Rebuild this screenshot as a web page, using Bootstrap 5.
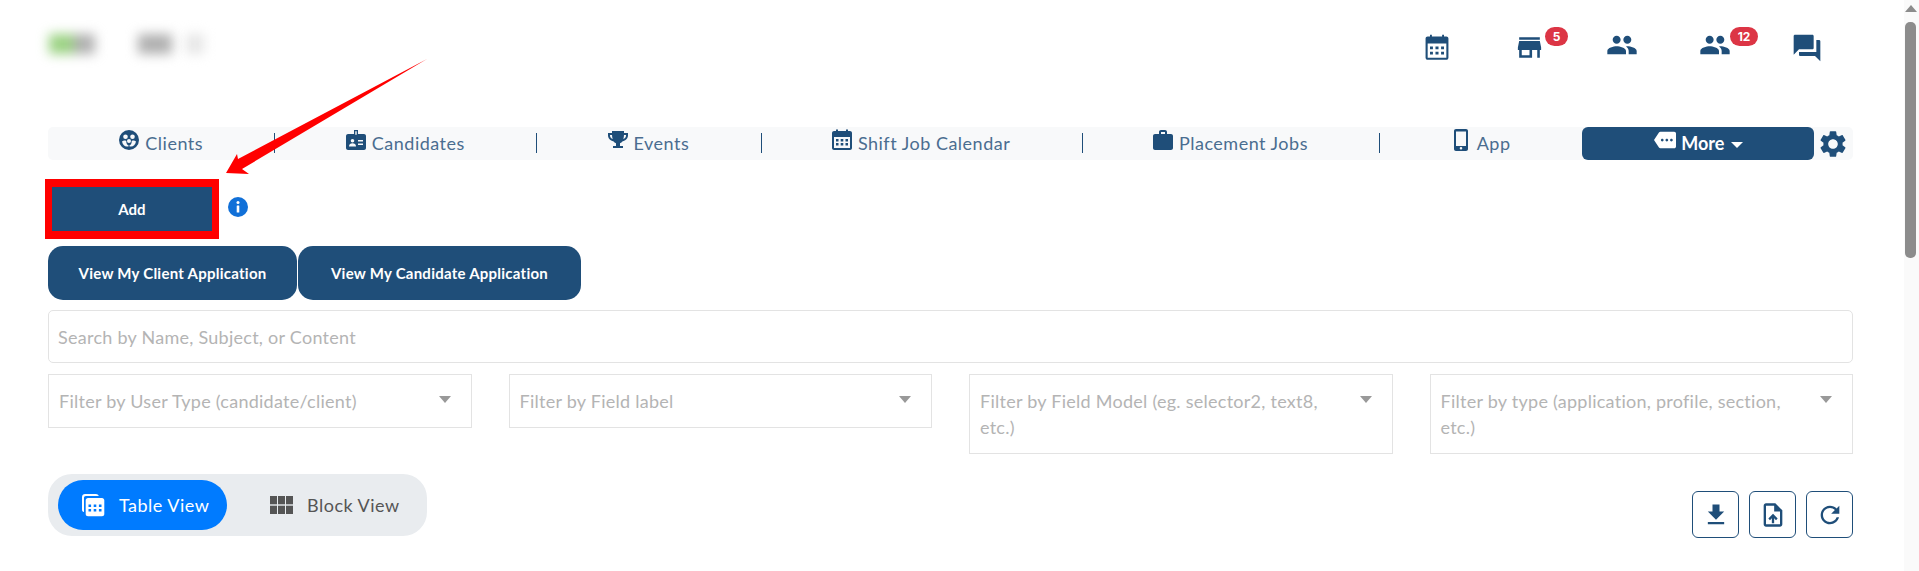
<!DOCTYPE html>
<html lang="en">
  <head>
    <meta charset="UTF-8" />
    <title>Application Fields</title>
    <link href="https://cdn.jsdelivr.net/npm/bootstrap@5.3.2/dist/css/bootstrap.min.css" rel="stylesheet" />
    <style>
      body {
        font-family: Lato, "Liberation Sans", sans-serif;
        background: #fff;
        overflow: hidden;
        height: 571px;
      }
      .page-wrap {
        padding: 0 66px 0 48px;
        position: relative;
      }
      .top-head {
        height: 127px;
        position: relative;
      }
      .blur-logo {
        position: absolute;
        top: 34px;
        height: 20px;
        filter: blur(6px);
      }
      .logo-a {
        left: 1px;
        width: 46px;
        background: linear-gradient(90deg, #9bd283 0 55%, #b0b0b0 55%);
      }
      .logo-b {
        left: 90px;
        width: 34px;
        background: #b0b0b0;
      }
      .logo-c {
        left: 138px;
        width: 18px;
        background: #e6e6e6;
      }
      .top-icon {
        position: absolute;
        fill: #1f4e79;
      }
      .top-badge {
        position: absolute;
        top: 27px;
        height: 19px;
        border-radius: 10px;
        background: #dc3545;
        color: #fff;
        font: 700 12px/19px Inter, sans-serif;
        text-align: center;
      }
      .main-nav {
        height: 33px;
        background: #f8f9fa;
        border-radius: 5px;
        flex-wrap: nowrap;
      }
      .main-nav .nav-link {
        height: 33px;
        padding: 0;
        color: #4a6d90;
        font-size: 18px;
        letter-spacing: 0.5px;
        line-height: 33px;
        white-space: nowrap;
        position: relative;
      }
      .main-nav .nav-item + .nav-item .nav-link::before {
        content: "";
        position: absolute;
        left: 0;
        top: 6px;
        height: 20px;
        width: 1px;
        background: #1f4e79;
      }
      .main-nav .nav-item.no-sep .nav-link::before {
        display: none;
      }
      .nav-ico {
        width: 20px;
        height: 22px;
        fill: #1f4e79;
        vertical-align: -2px;
        margin-right: 6px;
        position: relative;
        top: -1px;
      }
      .main-nav .more-link {
        background: #1f4e79;
        border-radius: 6px;
        color: #fff;
        font-weight: 700;
        letter-spacing: 0;
      }
      .more-caret {
        display: inline-block;
        border: 6px solid transparent;
        border-top-color: #fff;
        border-bottom: 0;
        vertical-align: 2px;
        margin-left: 2px;
      }
      .gear-ico {
        width: 32px;
        height: 32px;
        fill: #1f4e79;
        margin: 0 4px 0 3px;
        align-self: center;
      }
      .add-frame {
        border-style: solid;
        border-color: #f00;
        border-width: 8px 7px;
        margin: 19px 0 0 -3px;
        width: 174px;
        height: 60px;
      }
      .add-btn {
        width: 100%;
        height: 100%;
        background: #1f4e79;
        color: #fff;
        border: 0;
        border-radius: 0;
        font-size: 15px;
        font-weight: 700;
        padding: 0;
      }
      .info-ico {
        width: 20px;
        height: 20px;
        margin: 37px 0 0 9px;
      }
      .view-btn {
        height: 54px;
        background: #1f4e79;
        color: #fff;
        border-radius: 15px;
        font-size: 15px;
        font-weight: 700;
        letter-spacing: 0.25px;
        padding: 0;
        border: 0;
      }
      .view-btn:hover {
        background: #1f4e79;
        color: #fff;
      }
      .search-box {
        height: 53px;
        margin-top: 10px;
        border: 1px solid #e3e3e3;
        border-radius: 5px;
        padding: 0 9px;
        font-size: 18px;
        letter-spacing: 0.26px;
        color: #333;
      }
      .search-box::placeholder {
        color: #b4b4b4;
      }
      .filter-row {
        display: grid;
        grid-template-columns: repeat(4, 1fr);
        gap: 37px;
        align-items: start;
        margin-top: 11px;
      }
      .filter-box {
        border: 1px solid #e3e3e3;
        padding: 13px 55px 13px 10px;
        font-size: 18px;
        letter-spacing: 0.26px;
        line-height: 26px;
        color: #b4b4b4;
        position: relative;
      }
      .filter-box::after {
        content: "";
        position: absolute;
        right: 20px;
        top: 21px;
        border: 6px solid transparent;
        border-top: 7px solid #999;
        border-bottom: 0;
      }
      .toggle-row {
        margin-top: 20px;
      }
      .toggle-wrap {
        width: 379px;
        height: 62px;
        background: #e9ecef;
        border-radius: 24px;
        padding: 6px 10px;
      }
      .toggle-item {
        width: 169px;
        height: 50px;
        border-radius: 25px;
        font-size: 18px;
        letter-spacing: 0.5px;
        color: #555;
        padding-left: 23px;
        gap: 14px;
      }
      .toggle-item.is-on {
        background: #007bff;
        color: #fff;
      }
      .toggle-item.is-off {
        margin-left: 20px;
      }
      .square-row {
        margin-top: 17px;
        gap: 10px;
      }
      .square-btn {
        width: 47px;
        height: 47px;
        border: 1px solid #1f4e79;
        border-radius: 6px;
        background: #fff;
        padding: 0;
        fill: #1f4e79;
      }
      .square-btn svg {
        width: 28px;
        height: 28px;
      }
      .fake-scroll {
        position: fixed;
        top: 0;
        right: 0;
        bottom: 0;
        width: 15px;
        background: #fafafa;
      }
      .fake-thumb {
        position: absolute;
        top: 22px;
        left: 1px;
        width: 11px;
        height: 236px;
        background: #8c8c8c;
        border-radius: 5px;
      }
      .fake-up {
        position: absolute;
        top: 5px;
        left: 1px;
        border: 6px solid transparent;
        border-bottom: 7px solid #8c8c8c;
        border-top: 0;
      }
      .red-arrow {
        position: absolute;
        left: 0;
        top: 0;
        pointer-events: none;
      }
    </style>
  </head>
  <body>
    <div class="page-wrap">
      <div class="top-head">
        <div class="blur-logo logo-a"></div>
        <div class="blur-logo logo-b"></div>
        <div class="blur-logo logo-c"></div>

        <svg class="top-icon" style="left: 1374px; top: 33px" width="30" height="28" viewBox="0 0 24 24">
          <path d="M4 3h2V1.500h1.600V3h8.800V1.500H18V3h2c1 0 1.800.8 1.800 1.800v16.400c0 1-.8 1.800-1.800 1.800H4c-1 0-1.800-.8-1.800-1.800V4.800C2.200 3.800 3 3 4 3zm0 6v12.200h16V9H4zm2 2.500h2.500V14H6zm4.700 0h2.600V14h-2.600zm4.800 0H18V14h-2.500zM6 16h2.500v2.500H6zm4.700 0h2.600v2.500h-2.600zm4.800 0H18v2.500h-2.500z" />
        </svg>
        <svg class="top-icon" style="left: 1466px; top: 32px" width="31" height="31" viewBox="0 0 24 24">
          <path d="M20 4H4v2h16V4zm1 10v-2l-1-5H4l-1 5v2h1v6h10v-6h4v6h2v-6h1zm-9 4H6v-4h6v4z" />
        </svg>
        <span class="top-badge" style="left: 1497px; width: 23px">5</span>
        <svg class="top-icon" style="left: 1558px; top: 29px" width="32" height="32" viewBox="0 0 24 24">
          <path d="M16 11c1.660 0 2.990-1.340 2.990-3S17.660 5 16 5c-1.660 0-3 1.340-3 3s1.340 3 3 3zm-8 0c1.660 0 2.990-1.340 2.990-3S9.660 5 8 5C6.340 5 5 6.340 5 8s1.340 3 3 3zm0 2c-2.330 0-7 1.170-7 3.500V19h14v-2.500c0-2.330-4.670-3.500-7-3.500zm8 0c-.290 0-.620.020-.970.050 1.160.840 1.970 1.970 1.970 3.450V19h6v-2.500c0-2.330-4.670-3.500-7-3.500z" />
        </svg>
        <svg class="top-icon" style="left: 1651px; top: 29px" width="32" height="32" viewBox="0 0 24 24">
          <path d="M16 11c1.660 0 2.990-1.340 2.990-3S17.660 5 16 5c-1.660 0-3 1.340-3 3s1.340 3 3 3zm-8 0c1.660 0 2.990-1.340 2.990-3S9.660 5 8 5C6.340 5 5 6.340 5 8s1.340 3 3 3zm0 2c-2.330 0-7 1.170-7 3.500V19h14v-2.500c0-2.330-4.670-3.500-7-3.500zm8 0c-.290 0-.620.020-.970.050 1.160.840 1.970 1.970 1.970 3.450V19h6v-2.500c0-2.330-4.670-3.500-7-3.500z" />
        </svg>
        <span class="top-badge" style="left: 1682px; width: 28px">12</span>
        <svg class="top-icon" style="left: 1743px; top: 32px" width="32" height="32" viewBox="0 0 24 24">
          <path d="M21 6h-2v9H6v2c0 .550.450 1 1 1h11l4 4V7c0-.550-.450-1-1-1zm-4 6V3c0-.550-.450-1-1-1H3c-.550 0-1 .450-1 1v14l4-4h10c.550 0 1-.450 1-1z" />
        </svg>
      </div>

      <div class="d-flex main-nav">
        <ul class="nav nav-fill flex-grow-1 flex-nowrap">
          <li class="nav-item">
            <a class="nav-link" href="#">
              <svg class="nav-ico" viewBox="0 0 20 22">
                <path fill-rule="evenodd" d="M10 1a10 10 0 1 0 0 20 10 10 0 0 0 0-20zM6.500 5.500a2.300 2.300 0 1 1 0 4.600 2.300 2.300 0 0 1 0-4.600zm7 0a2.300 2.300 0 1 1 0 4.600 2.300 2.300 0 0 1 0-4.600zM10 10a2 2 0 1 1 0 4 2 2 0 0 1 0-4zM3 12.500c1.500-1.200 3-1 4.300-.5-.2 2 .8 4 2.700 5-3 1.500-6 0-7-4.500zm14 0c-1 4.500-4 6-7 4.500 1.900-1 2.900-3 2.700-5 1.300-.5 2.800-.7 4.300.5z" />
              </svg>Clients
            </a>
          </li>
          <li class="nav-item">
            <a class="nav-link" href="#">
              <svg class="nav-ico" viewBox="0 0 20 22">
                <path fill-rule="evenodd" d="M8 1h4v4h6c1 0 2 .8 2 2v12c0 1.200-1 2-2 2H2c-1 0-2-.8-2-2V7c0-1.200 1-2 2-2h6zM9.300 2.300v3.500h1.400V2.300zM6.500 10a1.800 1.800 0 1 0 0 3.600 1.800 1.800 0 0 0 0-3.600zM3 17.500h7c0-2-1.500-3.200-3.500-3.200S3 15.500 3 17.500zM12 11v1.500h5V11zm0 3.500V16h5v-1.500z" />
              </svg>Candidates
            </a>
          </li>
          <li class="nav-item">
            <a class="nav-link" href="#">
              <svg class="nav-ico" viewBox="0 0 20 22">
                <path fill-rule="evenodd" d="M4 2h12v2h4v2.500c0 3-2.500 5.300-5.300 5.800-.8 1-1.700 1.600-2.700 1.900V17h3v2H5v-2h3v-2.800c-1-.3-1.900-.9-2.700-1.900C2.500 11.800 0 9.500 0 6.500V4h4zM2 6v.500c0 1.700 1.200 3 2.700 3.600C4.300 8.800 4 7.400 4 6zm14 0c0 1.400-.3 2.800-.7 4.100 1.500-.6 2.700-1.900 2.700-3.600V6z" />
              </svg>Events
            </a>
          </li>
          <li class="nav-item">
            <a class="nav-link" href="#">
              <svg class="nav-ico" viewBox="0 0 20 22">
                <path fill-rule="evenodd" d="M2 2h2V.500h2V2h8V.500h2V2h2c1 0 2 .8 2 2v15c0 1.200-1 2-2 2H2c-1 0-2-.8-2-2V4c0-1.200 1-2 2-2zm0 6v11h16V8zm2 2h2.500v2.500H4zm4.700 0h2.600v2.500H8.700zm4.800 0H16v2.500h-2.500zM4 14h2.500v2.500H4zm4.700 0h2.600v2.500H8.700zm4.800 0H16v2.500h-2.500z" />
              </svg>Shift Job Calendar
            </a>
          </li>
          <li class="nav-item">
            <a class="nav-link" href="#">
              <svg class="nav-ico" viewBox="0 0 20 22">
                <path fill-rule="evenodd" d="M6 5V3c0-1.200.9-2 2-2h4c1.100 0 2 .8 2 2v2h4c1.100 0 2 .8 2 2v12c0 1.200-.9 2-2 2H2c-1.100 0-2-.8-2-2V7c0-1.200.9-2 2-2zm2-2v2h4V3z" />
              </svg>Placement Jobs
            </a>
          </li>
          <li class="nav-item">
            <a class="nav-link" href="#">
              <svg class="nav-ico" viewBox="0 0 20 22">
                <path fill-rule="evenodd" d="M5 0h10c1.200 0 2 .8 2 2v18c0 1.200-.8 2-2 2H5c-1.200 0-2-.8-2-2V2c0-1.200.8-2 2-2zm0 2.500V17h10V2.500zM10 18a1.300 1.300 0 1 0 0 2.600 1.300 1.300 0 0 0 0-2.600z" />
              </svg>App
            </a>
          </li>
          <li class="nav-item no-sep">
            <a class="nav-link more-link" href="#">
              <svg class="nav-ico" style="width: 24px; fill: #fff; margin-right: 4px" viewBox="0 0 24 24">
                <path d="M22 3H7c-.690 0-1.230.350-1.590.880L0 12l5.410 8.110c.360.530.900.890 1.590.890h15c1.100 0 2-.900 2-2V5c0-1.100-.900-2-2-2zM9 13.500c-.830 0-1.500-.670-1.500-1.500s.670-1.500 1.500-1.500 1.500.670 1.500 1.500-.670 1.500-1.500 1.500zm5 0c-.830 0-1.500-.670-1.500-1.500s.670-1.500 1.500-1.500 1.500.670 1.500 1.500-.670 1.500-1.500 1.500zm5 0c-.830 0-1.500-.670-1.500-1.500s.670-1.500 1.500-1.500 1.500.670 1.500 1.500-.670 1.500-1.500 1.500z" />
              </svg>More <span class="more-caret"></span>
            </a>
          </li>
        </ul>
        <svg class="gear-ico flex-shrink-0" viewBox="0 0 24 24">
          <path d="M19.140 12.940c.040-.300.060-.610.060-.940 0-.320-.020-.640-.070-.940l2.030-1.580c.180-.140.230-.410.120-.610l-1.920-3.320c-.120-.220-.370-.290-.590-.220l-2.390.960c-.500-.380-1.030-.700-1.620-.940l-.360-2.540c-.040-.240-.240-.410-.480-.410h-3.840c-.240 0-.430.170-.470.410l-.360 2.540c-.590.240-1.130.570-1.620.940l-2.390-.960c-.220-.080-.470 0-.590.220L2.740 8.870c-.120.210-.080.470.120.610l2.030 1.580c-.050.300-.090.630-.090.940s.020.640.070.940l-2.030 1.580c-.180.140-.230.410-.12.610l1.920 3.320c.120.220.370.290.590.220l2.390-.960c.500.380 1.030.700 1.620.940l.360 2.540c.050.240.240.410.480.410h3.840c.240 0 .440-.170.470-.410l.360-2.540c.590-.240 1.130-.560 1.620-.940l2.390.960c.220.080.470 0 .590-.220l1.920-3.320c.120-.220.070-.470-.120-.610l-2.010-1.580zM12 15.600c-1.980 0-3.600-1.620-3.600-3.600s1.620-3.600 3.600-3.600 3.600 1.620 3.600 3.600-1.620 3.600-3.600 3.600z" />
        </svg>
      </div>

      <div class="d-flex align-items-start">
        <div class="add-frame"><button class="btn add-btn">Add</button></div>
        <svg class="info-ico" viewBox="0 0 20 20">
          <circle cx="10" cy="10" r="10" fill="#1170d8" />
          <circle cx="10" cy="5.500" r="1.500" fill="#fff" />
          <rect x="8.700" y="8.500" width="2.600" height="7" rx="0.500" fill="#fff" />
        </svg>
      </div>

      <div class="d-flex" style="gap: 1px; margin-top: 7px">
        <button class="btn view-btn" style="width: 249px">View My Client Application</button>
        <button class="btn view-btn" style="width: 283px">View My Candidate Application</button>
      </div>

      <input class="form-control search-box" type="text" placeholder="Search by Name, Subject, or Content" />

      <div class="filter-row">
        <div class="filter-box">Filter by User Type (candidate/client)</div>
        <div class="filter-box">Filter by Field label</div>
        <div class="filter-box">Filter by Field Model (eg. selector2, text8, etc.)</div>
        <div class="filter-box">Filter by type (application, profile, section, etc.)</div>
      </div>

      <div class="d-flex justify-content-between align-items-start toggle-row">
        <div class="d-flex toggle-wrap">
          <div class="d-flex align-items-center toggle-item is-on">
            <svg width="24" height="24" viewBox="0 0 24 24" fill="#fff">
              <path d="M4 1h11c1.200 0 2.500.8 2.800 2H5C3.500 3 3 3.800 3 5v14c-1.400-.2-2-1.200-2-2.500V4c0-1.700 1.300-3 3-3z" />
              <path fill-rule="evenodd" d="M7 5h14c1.300 0 2.300 1 2.300 2.300V21c0 1.300-1 2.300-2.300 2.300H7c-1.300 0-2.300-1-2.300-2.300V7.300C4.700 6 5.700 5 7 5zm.5 6.500V14h2.600v-2.500zm5.200 0V14h2.600v-2.500zm5.200 0V14h2.600v-2.500zM7.500 16v2.500h2.600V16zm5.200 0v2.500h2.600V16zm5.200 0v2.500h2.600V16z" />
            </svg>
            Table View
          </div>
          <div class="d-flex align-items-center toggle-item is-off">
            <svg width="23" height="18" viewBox="0 0 23 18" fill="#555">
              <rect width="7" height="8.300" />
              <rect x="8" width="7" height="8.300" />
              <rect x="16" width="7" height="8.300" />
              <rect y="9.700" width="7" height="8.300" />
              <rect x="8" y="9.700" width="7" height="8.300" />
              <rect x="16" y="9.700" width="7" height="8.300" />
            </svg>
            Block View
          </div>
        </div>
        <div class="d-flex square-row">
          <button class="btn square-btn">
            <svg viewBox="0 0 24 24"><path d="M19 9h-4V3H9v6H5l7 7 7-7zM5 18v2h14v-2H5z" /></svg>
          </button>
          <button class="btn square-btn">
            <svg viewBox="0 0 24 24">
              <path d="M14 2H6c-1.100 0-2 .9-2 2v16c0 1.100.9 2 2 2h12c1.100 0 2-.9 2-2V8l-6-6zm4 18H6V4h7v5h5v11zM8 15.010l1.410 1.410L11 14.840V19h2v-4.160l1.590 1.590L16 15.010 12.010 11 8 15.010z" />
            </svg>
          </button>
          <button class="btn square-btn">
            <svg viewBox="0 0 24 24">
              <path d="M17.650 6.350C16.200 4.900 14.210 4 12 4c-4.420 0-7.990 3.580-7.990 8s3.570 8 7.990 8c3.730 0 6.840-2.550 7.730-6h-2.080c-.820 2.330-3.040 4-5.650 4-3.310 0-6-2.690-6-6s2.690-6 6-6c1.660 0 3.140.690 4.220 1.780L13 11h7V4l-2.350 2.350z" />
            </svg>
          </button>
        </div>
      </div>
    </div>

    <!-- annotation arrow drawn over the page -->
    <svg class="red-arrow" width="1919" height="571">
      <polygon points="427,59 242,169 249,174 226,173 237,154 238,159" fill="#f00" />
    </svg>

    <div class="fake-scroll">
      <div class="fake-up"></div>
      <div class="fake-thumb"></div>
    </div>

    <script src="https://cdn.jsdelivr.net/npm/bootstrap@5.3.2/dist/js/bootstrap.bundle.min.js"></script>
  </body>
</html>
